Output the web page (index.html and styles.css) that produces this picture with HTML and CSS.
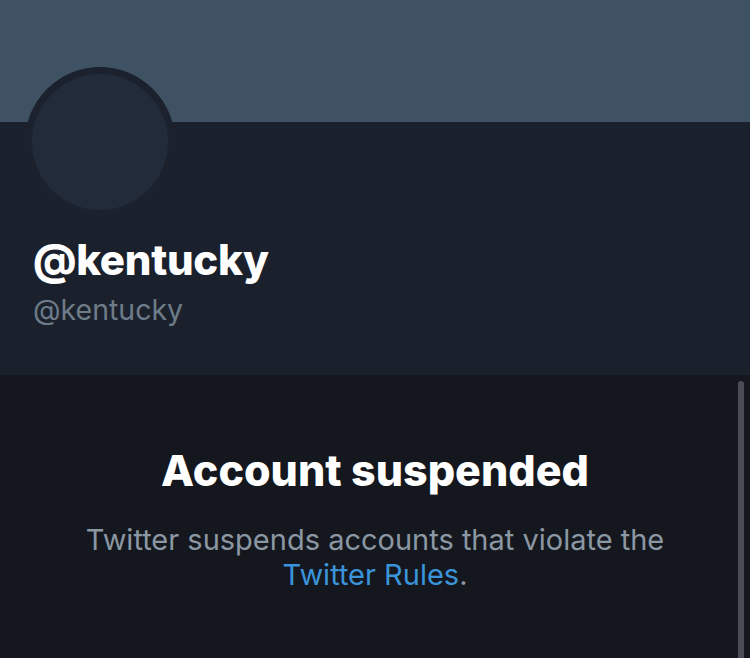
FILE: index.html
```html
<!DOCTYPE html>
<html>
<head>
<meta charset="utf-8">
<link rel="stylesheet" href="styles.css">
</head>
<body>
<div class="page">
  <div class="banner"></div>
  <div class="profile">
    <div class="avatar"><div class="avatar-inner"></div></div>
    <div class="name">@kentucky</div>
    <div class="handle">@kentucky</div>
  </div>
  <div class="content">
    <div class="notice">
      <h1 class="title">Account suspended</h1>
      <p class="desc">Twitter suspends accounts that violate the <a class="link">Twitter Rules</a>.</p>
    </div>
    <div class="scrollbar"></div>
  </div>
</div>
</body>
</html>
```
FILE: styles.css
```css
html, body { margin: 0; padding: 0; }
body {
  width: 750px; height: 658px; overflow: hidden;
  background: #14171e;
  font-family: Inter, "Liberation Sans", sans-serif;
}
.page { display: flex; flex-direction: column; height: 658px; }
.banner { height: 122px; background: #3f5264; flex: none; }
.profile {
  position: relative;
  height: 253px; flex: none;
  background: #1b212c;
  padding: 0 0 0 33px;
  box-sizing: border-box;
  display: flex; flex-direction: column;
}
.avatar {
  position: absolute; left: 25px; top: -55px;
  width: 150px; height: 150px; border-radius: 50%;
  background: #1b222d;
  display: flex; align-items: center; justify-content: center;
}
.avatar-inner { width: 136px; height: 136px; border-radius: 50%; background: #222b39; }
.name {
  margin-top: 115px;
  color: #ffffff; font-weight: 800; font-size: 42px; line-height: 46px;
  letter-spacing: -0.3px;
}
.handle {
  margin-top: 11px;
  color: #6e7b88; font-size: 28.5px; line-height: 32px;
}
.content { flex: 1; position: relative; display: flex; justify-content: center; }
.notice { text-align: center; padding-top: 72px; width: 620px; }
.title {
  margin: 0; color: #fff; font-weight: 800; font-size: 43px; line-height: 46px;
  letter-spacing: 0;
}
.desc {
  margin: 29px 0 0; color: #8b97a3; font-size: 29px; line-height: 35px;
}
.link { color: #3b94d9; text-decoration: none; }
.scrollbar {
  position: absolute; right: 6px; top: 6px; bottom: 0;
  width: 6px; background: #4a4d55; border-radius: 3px 3px 0 0;
}
```
